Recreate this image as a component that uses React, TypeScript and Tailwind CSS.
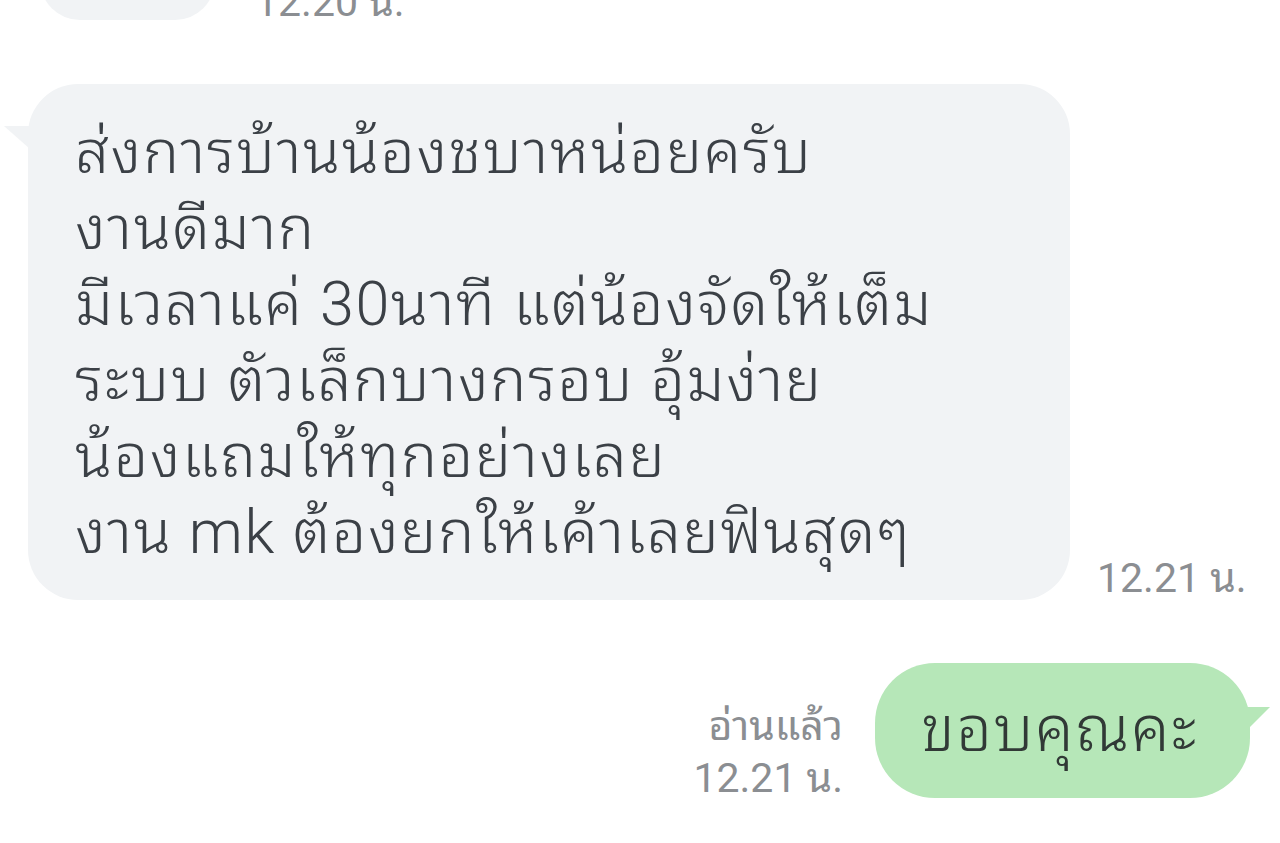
import React from "react";

const lines = [
  "ส่งการบ้านน้องชบาหน่อยครับ",
  "งานดีมาก",
  "มีเวลาแค่ 30นาที แต่น้องจัดให้เต็ม",
  "ระบบ ตัวเล็กบางกรอบ อุ้มง่าย",
  "น้องแถมให้ทุกอย่างเลย",
  "งาน mk ต้องยกให้เค้าเลยฟินสุดๆ",
];

function Stamp({ children, className = "" }: { children: React.ReactNode; className?: string }) {
  return (
    <div className={`text-[41px] leading-[52px] text-[#8b8e92] ${className}`}>{children}</div>
  );
}

export default function App() {
  return (
    <div className="h-[843px] w-[1280px] overflow-hidden bg-white font-[Roboto,'Noto_Sans_Thai_Looped',sans-serif]">
      {/* previous message, cut at the top */}
      <div className="-mt-[60px] flex items-end gap-[40px] pl-[40px]">
        <div className="h-[80px] w-[175px] rounded-[40px] bg-[#f1f3f5]" />
        <Stamp className="mb-[-8px]">12.20 น.</Stamp>
      </div>

      {/* received message */}
      <div className="mt-[64px] flex items-end gap-[27px] pl-[28px]">
        <div className="relative w-[1042px] rounded-[50px] bg-[#f1f3f5] py-[30px] pl-[47px] pr-[40px] text-[#3b4046]">
          <svg className="absolute left-[-24px] top-[42px]" width="34" height="30" viewBox="0 0 34 30">
            <path d="M0 0 L34 0 L34 30 Z" fill="#f1f3f5" />
          </svg>
          {lines.map((l) => (
            <div key={l} className="whitespace-nowrap text-[61px] font-[360] leading-[76px] tracking-[1.6px]">
              {l}
            </div>
          ))}
        </div>
        <Stamp className="mb-[-4px]">12.21 น.</Stamp>
      </div>

      {/* sent message */}
      <div className="mt-[63px] flex items-end justify-end gap-[32px] pr-[30px]">
        <div className="mb-[-6px] flex flex-col items-end">
          <Stamp>อ่านแล้ว</Stamp>
          <Stamp>12.21 น.</Stamp>
        </div>
        <div className="relative flex h-[135px] w-[375px] items-center justify-center rounded-[60px] bg-[#b6e7b8] pr-[6px] text-[63px] font-[360] tracking-[1.5px] text-[#313936]">
          <svg className="absolute right-[-20px] top-[44px]" width="30" height="30" viewBox="0 0 30 30">
            <path d="M0 0 L30 0 L0 30 Z" fill="#b6e7b8" />
          </svg>
          ขอบคุณคะ
        </div>
      </div>
    </div>
  );
}
